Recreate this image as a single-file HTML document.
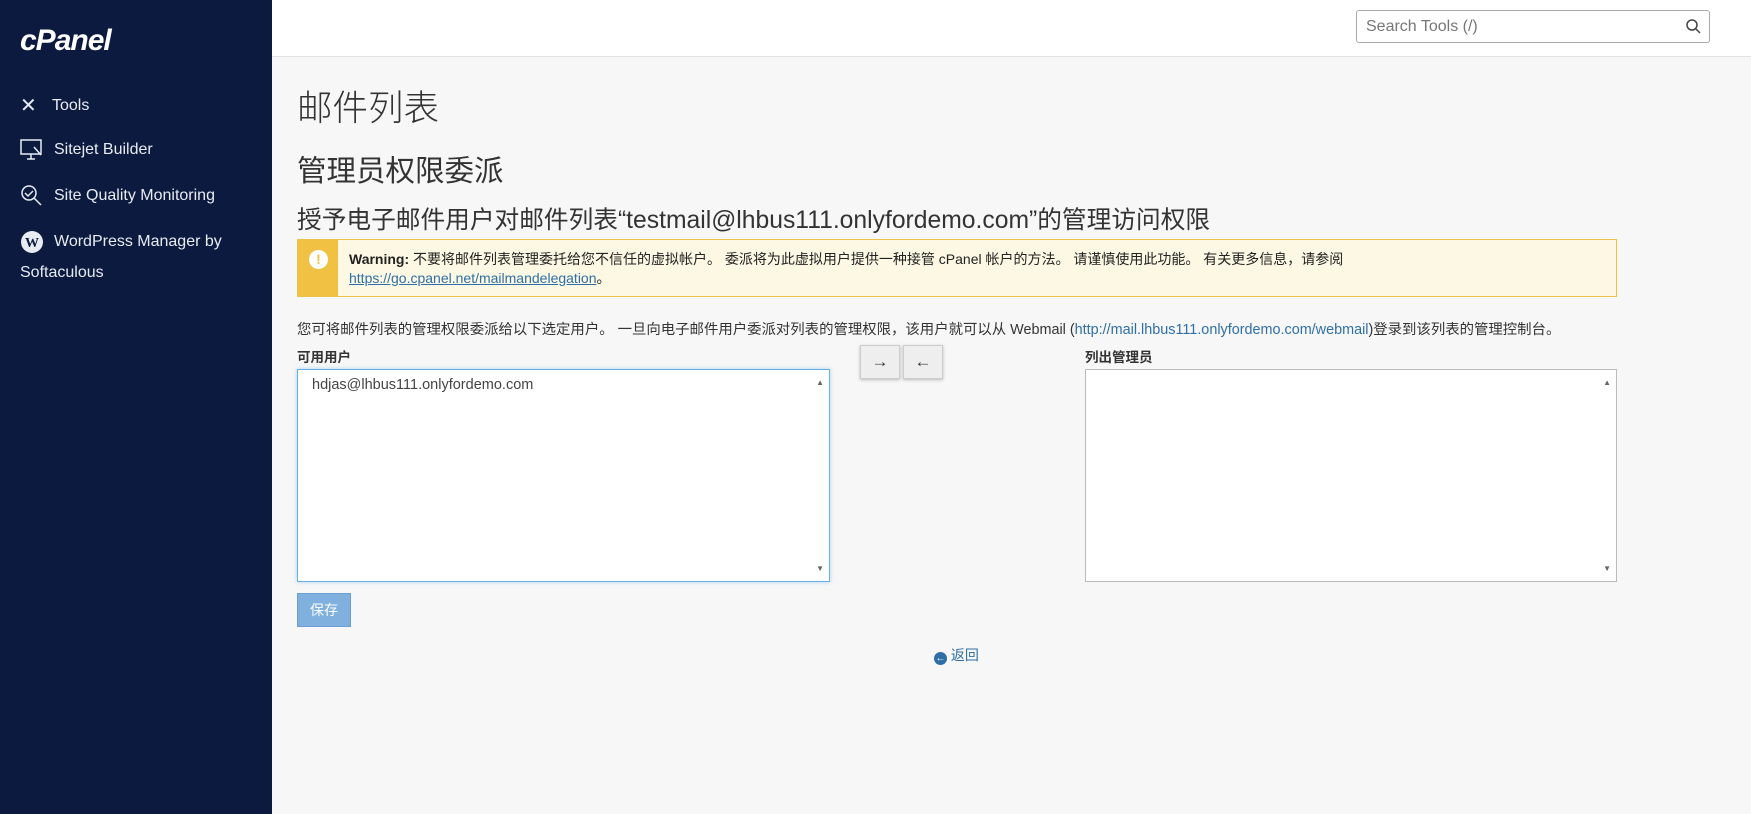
<!DOCTYPE html>
<html><head><meta charset="utf-8"><style>
*{box-sizing:border-box;margin:0;padding:0}
body{width:1751px;height:814px;overflow:hidden;background:#f7f7f7;font-family:"Liberation Sans","Noto Sans CJK SC",sans-serif;position:relative;color:#333}
.sb{position:absolute;left:0;top:0;width:272px;height:814px;background:#0b1a3e;color:#e8ebf2}
.logo{position:absolute;left:20px;top:24px;font:italic bold 30px "Liberation Sans",sans-serif;color:#fff;letter-spacing:-1px}
.mi{position:absolute;left:20px;font-size:16px;display:flex;align-items:center;gap:10px}
.top{position:absolute;left:272px;top:0;right:0;height:57px;background:#fff;border-bottom:1px solid #e2e2e2}
.search{position:absolute;left:1356px;top:10px;width:354px;height:33px;border:1px solid #aaa;border-radius:3px;background:#fff;font-size:16px;color:#777;padding:7px 9px}
.t{position:absolute;left:297px;color:#333;white-space:nowrap}
.warn{position:absolute;left:297px;top:239px;width:1320px;height:58px;border:1px solid #e8c34c;background:#fcf8e3;font-size:14px;color:#222}
.warn .bar{position:absolute;left:0;top:0;bottom:0;width:40px;background:#f0c142}
.warn .ic{position:absolute;left:11px;top:10px;width:19px;height:19px;border-radius:50%;background:#fff;color:#f0c142;font-weight:bold;font-size:14px;text-align:center;line-height:19px}
a{color:#2f6fa7}
.sel{position:absolute;top:369px;width:533px;height:213px;border:1px solid #bbb;background:#fff;font-size:14.5px;color:#444}
.btn{position:absolute;top:345px;width:40px;height:34px;background:#eee;border:1px solid #ccc;box-shadow:0 1px 3px rgba(0,0,0,.25);text-align:center;line-height:32px;font-size:17px;color:#333}
.arr{position:absolute;right:5px;font-size:8px;color:#666}
</style></head><body>
<div class="sb">
<div class="logo">cPanel</div>
<div class="mi" style="top:93px"><span style="font-size:20px;width:22px">✕</span>Tools</div>
<div class="mi" style="top:139px"><svg width="24" height="22" viewBox="0 0 24 22" fill="none" stroke="#e8ebf2" stroke-width="1.5"><rect x="1" y="1" width="20" height="14"/><path d="M7 20h8M11 15v5M14 8l7 8"/></svg>Sitejet Builder</div>
<div class="mi" style="top:184px"><svg width="24" height="24" viewBox="0 0 24 24" fill="none" stroke="#e8ebf2" stroke-width="1.5"><circle cx="9" cy="9" r="7"/><path d="M5 9l3 3 5-5M14 14l7 7"/></svg>Site Quality Monitoring</div>
<div class="mi" style="top:230px"><svg width="24" height="24" viewBox="0 0 24 24"><circle cx="12" cy="12" r="11" fill="#e8ebf2"/><text x="12" y="17" font-size="14" font-weight="bold" text-anchor="middle" fill="#0b1a3e" font-family="Liberation Serif">W</text></svg>WordPress Manager by</div>
<div class="mi" style="top:264px">Softaculous</div>
</div>
<div class="top"></div>
<div class="search">Search Tools (/)<svg style="position:absolute;right:8px;top:8px" width="15" height="15" viewBox="0 0 15 15" fill="none" stroke="#444" stroke-width="1.5"><circle cx="6" cy="6" r="5"/><path d="M10 10l4 4"/></svg></div>
<div class="t" style="top:80px;font-size:35.5px;font-weight:300">邮件列表</div>
<div class="t" style="top:148px;font-size:29.5px">管理员权限委派</div>
<div class="t" style="top:200px;font-size:24.7px">授予电子邮件用户对邮件列表“testmail@lhbus111.onlyfordemo.com”的管理访问权限</div>
<div class="warn"><div class="bar"><div class="ic">!</div></div>
<div style="position:absolute;left:51px;top:10px;line-height:19px"><b>Warning:</b> 不要将邮件列表管理委托给您不信任的虚拟帐户。 委派将为此虚拟用户提供一种接管 cPanel 帐户的方法。 请谨慎使用此功能。 有关更多信息，请参阅<br><a href="#">https://go.cpanel.net/mailmandelegation</a>。</div></div>
<div class="t" style="top:318px;font-size:14.4px">您可将邮件列表的管理权限委派给以下选定用户。 一旦向电子邮件用户委派对列表的管理权限，该用户就可以从 Webmail (<a href="#" style="text-decoration:none">http://mail.lhbus111.onlyfordemo.com/webmail</a>)登录到该列表的管理控制台。</div>
<div class="t" style="top:346px;font-size:13.5px;font-weight:bold">可用用户</div>
<div class="t" style="left:1085px;top:346px;font-size:13.5px;font-weight:bold">列出管理员</div>
<div class="sel" style="left:297px;border-color:#66afe9;box-shadow:0 0 4px rgba(102,175,233,.5)"><div style="padding:7px 14px">hdjas@lhbus111.onlyfordemo.com</div><span class="arr" style="top:8px">▲</span><span class="arr" style="bottom:8px">▼</span></div>
<div class="sel" style="left:1085px;width:532px"><span class="arr" style="top:8px">▲</span><span class="arr" style="bottom:8px">▼</span></div>
<div class="btn" style="left:860px">→</div>
<div class="btn" style="left:903px">←</div>
<div style="position:absolute;left:297px;top:593px;width:54px;height:34px;background:#7fb0de;border:1px solid #6a9fd0;color:#fff;font-size:14px;text-align:center;line-height:32px">保存</div>
<div style="position:absolute;left:934px;top:645px;font-size:14px;color:#2f6fa7"><span style="display:inline-block;width:13px;height:13px;border-radius:50%;background:#2f6fa7;color:#fff;font-size:10px;line-height:13px;text-align:center;vertical-align:-1px">←</span> 返回</div>
</body></html>
